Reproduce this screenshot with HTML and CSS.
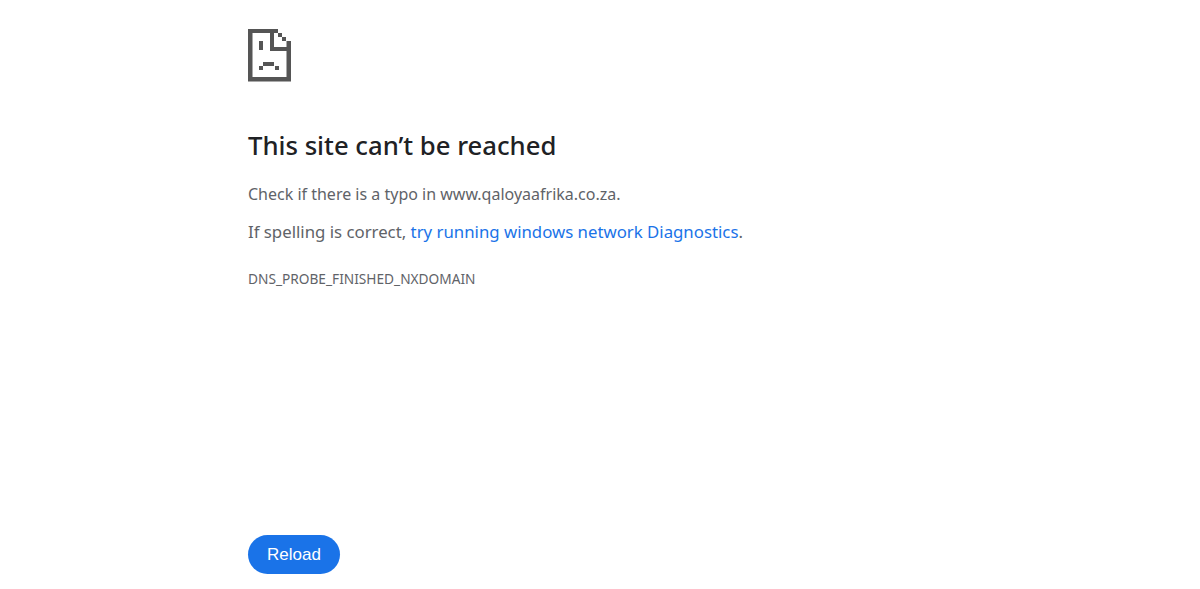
FILE: index.html
```html
<!DOCTYPE html>
<html lang="en">
<head>
    <meta charset="UTF-8">
    <title>This site can't be reached</title>
    <link rel="stylesheet" href="styles.css">
</head>
<body>
    <div class="page">
        <svg class="icon" viewBox="0 0 44 53" width="44" height="53" fill="#555">
            <!-- outline -->
            <path d="M0 0H30V4H4.5V48H38.5V12H43V52.5H0Z"/>
            <!-- fold -->
            <path d="M22 4H26V18H39V22H22Z"/>
            <rect x="30" y="4" width="4" height="4"/>
            <rect x="34" y="8" width="4" height="4"/>
            <!-- face -->
            <rect x="11" y="12" width="4" height="9"/>
            <rect x="15" y="33" width="11" height="4"/>
            <rect x="11" y="37" width="4" height="4"/>
            <rect x="27" y="37" width="4" height="4"/>
        </svg>
        <h1 class="title">This site can’t be reached</h1>
        <p class="line">Check if there is a typo in www.qaloyaafrika.co.za.</p>
        <p class="line line-big">If spelling is correct, <a href="#" class="link">try running windows network Diagnostics</a>.</p>
        <div class="code">DNS_PROBE_FINISHED_NXDOMAIN</div>
        <button class="reload">Reload</button>
    </div>
</body>
</html>
```
FILE: styles.css
```css
* {
    margin: 0;
    padding: 0;
}
html, body {
    height: 100%;
}
body {
    background-color: #fff;
    font-family: "Noto Sans", "Open Sans", sans-serif;
    overflow: hidden;
}
.page {
    height: 589px;
    box-sizing: border-box;
    padding: 29px 0 15px 248px;
    display: flex;
    flex-direction: column;
    align-items: flex-start;
}
.icon {
    display: block;
}
.title {
    margin-top: 46px;
    font-size: 25.7px;
    line-height: 36px;
    font-weight: 500;
    color: #202124;
}
.line {
    font-size: 16px;
    line-height: 24px;
    color: #5f6368;
    margin-top: 14px;
}
.title + .line {
    margin-top: 18px;
}
.line-big {
    font-size: 16.8px;
}
.link {
    color: #1a73e8;
    text-decoration: none;
}
.code {
    margin-top: 26px;
    font-size: 13.7px;
    line-height: 18px;
    color: #5f6368;
}
.reload {
    margin-top: auto;
    width: 92px;
    height: 39px;
    border: none;
    border-radius: 20px;
    background-color: #1a73e8;
    color: #fff;
    font-family: "Liberation Sans", Arial, sans-serif;
    font-size: 17px;
}
```
